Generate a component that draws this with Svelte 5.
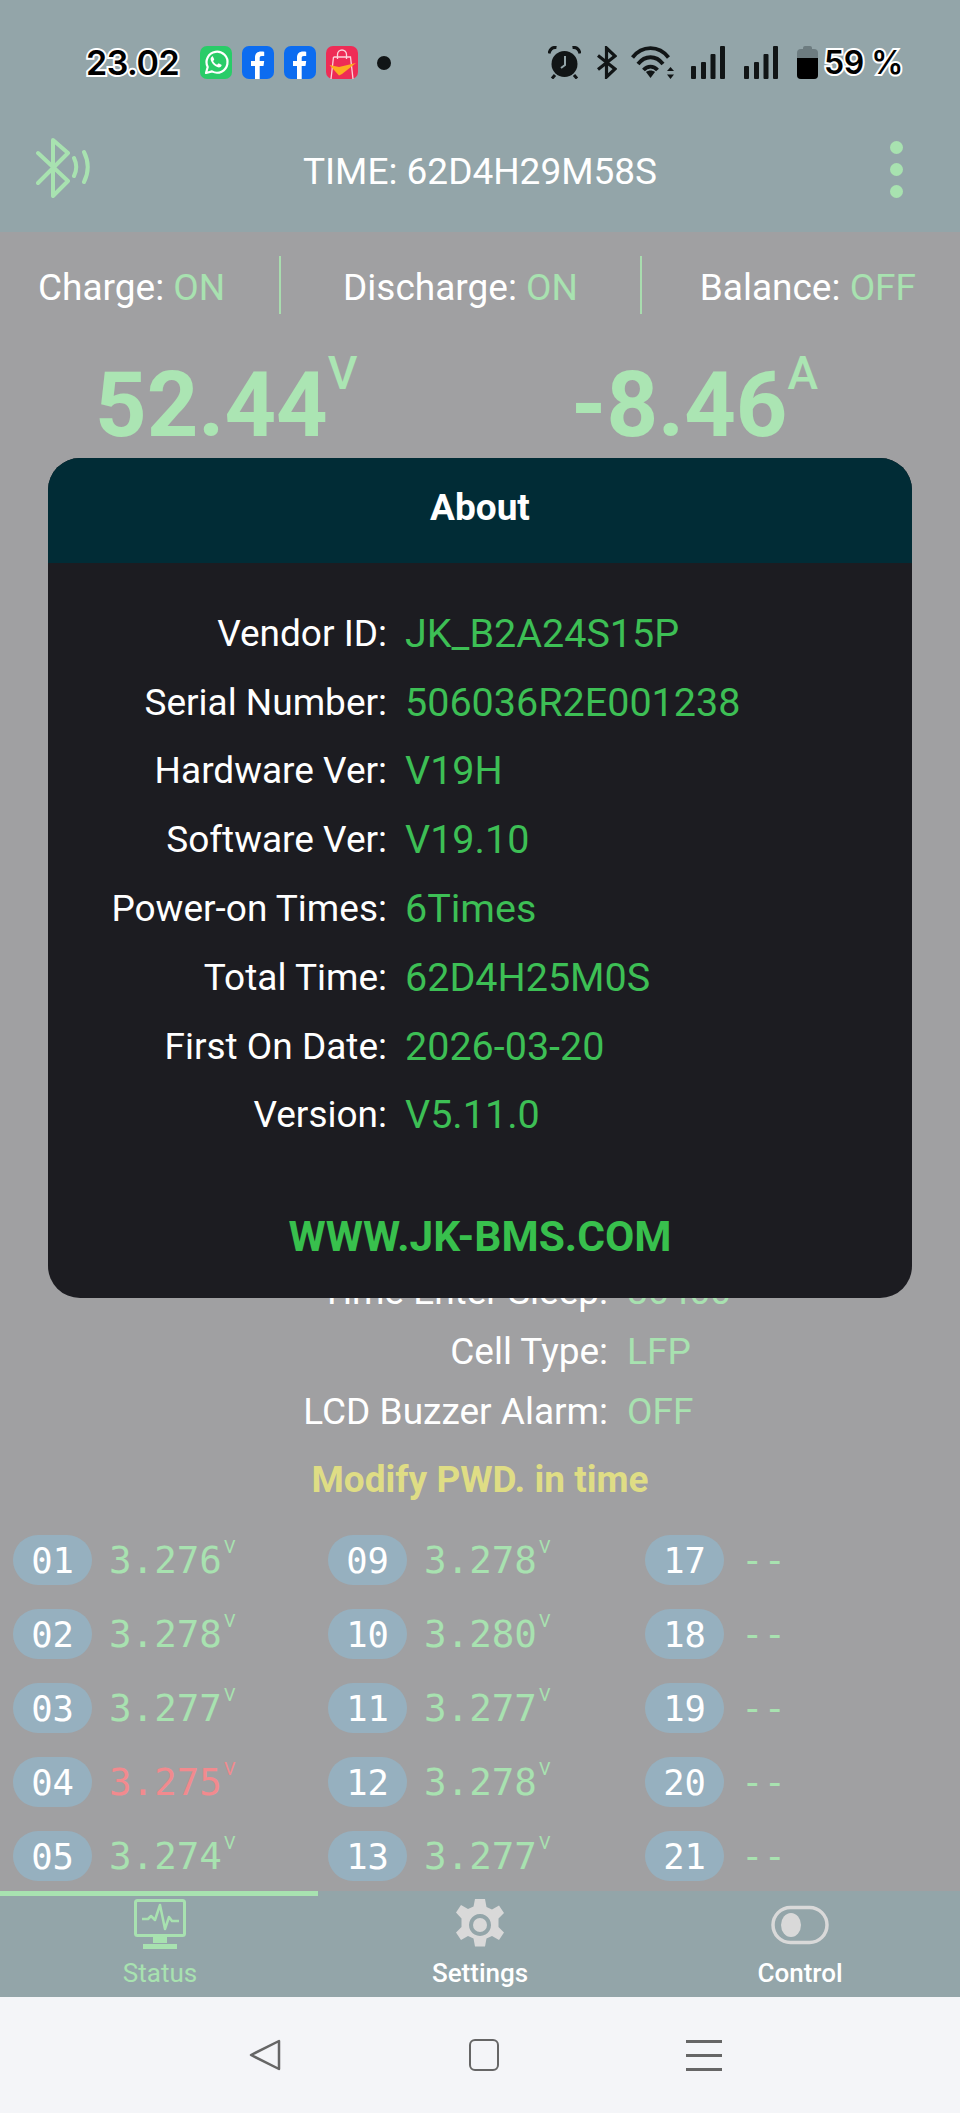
<script lang="ts">
	const switches = [
		{ label: 'Charge:', value: 'ON' },
		{ label: 'Discharge:', value: 'ON' },
		{ label: 'Balance:', value: 'OFF' }
	];

	const readings = [
		{ value: '52.44', unit: 'V' },
		{ value: '-8.46', unit: 'A' }
	];

	const settings = [
		{ label: 'Time Enter Sleep:', value: '86400' },
		{ label: 'Cell Type:', value: 'LFP' },
		{ label: 'LCD Buzzer Alarm:', value: 'OFF' }
	];

	const cells = [
		[
			{ id: '01', v: '3.276' },
			{ id: '02', v: '3.278' },
			{ id: '03', v: '3.277' },
			{ id: '04', v: '3.275', low: true },
			{ id: '05', v: '3.274' }
		],
		[
			{ id: '09', v: '3.278' },
			{ id: '10', v: '3.280' },
			{ id: '11', v: '3.277' },
			{ id: '12', v: '3.278' },
			{ id: '13', v: '3.277' }
		],
		[
			{ id: '17' },
			{ id: '18' },
			{ id: '19' },
			{ id: '20' },
			{ id: '21' }
		]
	];

	const about = [
		['Vendor ID:', 'JK_B2A24S15P'],
		['Serial Number:', '506036R2E001238'],
		['Hardware Ver:', 'V19H'],
		['Software Ver:', 'V19.10'],
		['Power-on Times:', '6Times'],
		['Total Time:', '62D4H25M0S'],
		['First On Date:', '2026-03-20'],
		['Version:', 'V5.11.0']
	];
</script>

{#snippet fbIcon()}
	<svg class="app-icon" viewBox="0 0 32 33">
		<rect width="32" height="33" rx="7" fill="#0c6cf0" />
		<path d="M13 33V20H9v-5h4v-3.500C13 7.500 15.500 5.500 19 5.500c1.500 0 2.800.1 3.200.2v4.300h-2.300c-1.800 0-2.200.9-2.200 2.100V15h4.500l-.7 5h-3.800v13z" fill="#fff" />
	</svg>
{/snippet}

{#snippet signalIcon()}
	<svg class="signal" viewBox="0 0 34 33">
		<rect x="0" y="20" width="5" height="13" rx="1" />
		<rect x="10" y="16" width="5" height="17" rx="1" />
		<rect x="19.500" y="8" width="5" height="25" rx="1" />
		<rect x="29" y="0" width="5" height="33" rx="1" />
	</svg>
{/snippet}

<div class="screen">
	<header class="top">
		<div class="status-bar">
			<div class="status-left">
				<span class="clock">23.02</span>
				<div class="app-icons">
					<svg class="app-icon" viewBox="0 0 32 33">
						<rect width="32" height="33" rx="7" fill="#29cc68" />
						<path d="M6 27l1.700-6A10.500 10.500 0 1 1 12 25.400z" fill="none" stroke="#fff" stroke-width="2.200" stroke-linejoin="round" />
						<path d="M12 10.500c-1.500 1-1.800 2.800-.8 4.800 1.300 2.700 3.300 4.600 6 5.700 1.900.8 3.500.3 4.300-1.200.2-.4.200-.8-.1-1l-2.400-1.300c-.3-.2-.6-.1-.8.1l-1 1.200c-1.800-.7-3.300-2.100-4.100-3.900l.9-1c.2-.3.3-.5.100-.8L13 10.700c-.2-.4-.6-.4-1-.2z" fill="#fff" />
					</svg>
					{@render fbIcon()}
					{@render fbIcon()}
					<svg class="app-icon" viewBox="0 0 32 33">
						<rect width="32" height="33" rx="7" fill="#ee2c56" />
						<path d="M7.500 11h17l2.500 22M7.500 11L5 33M11.500 13V8.500a4.500 4.500 0 0 1 9 0V13" fill="none" stroke="#fbd5dc" stroke-width="1.300" />
						<path d="M3.500 19l9.500 2 17-4-14 11-3 1.500z" fill="#fdae1f" />
					</svg>
				</div>
				<span class="notif-dot"></span>
			</div>
			<div class="status-right">
				<svg class="alarm" viewBox="0 0 33 33">
					<circle cx="16.500" cy="18" r="13" fill="#111516" />
					<path d="M1 7.500C2 3 5 1 8.500 1.500M32 7.500C31 3 28 1 24.500 1.500" fill="none" stroke="#111516" stroke-width="3" />
					<path d="M7 29l-3 3.500M26 29l3 3.500" stroke="#111516" stroke-width="3" />
					<path d="M17 10v9l-4 3" fill="none" stroke="#93a5a9" stroke-width="2" />
				</svg>
				<svg class="bt" viewBox="0 0 21 33">
					<path d="M2 9.500L19 23l-8.500 8V2L19 10 2 23.500" fill="none" stroke="#111516" stroke-width="3.200" />
				</svg>
				<svg class="wifi" viewBox="0 0 45 33">
					<path d="M1.500 11.500C11 -1 28 -1 37.500 11.500M7 18C14 9 25 9 32 18M12.500 24c4-4.500 10-4.500 14 0" fill="none" stroke="#111516" stroke-width="3.800" />
					<path d="M15 26c2.500-2 6.500-2 9 0l-4.500 6z" fill="#111516" />
					<path d="M39.500 21l-3.500 4h7zM39.500 33l-3.500-4.500h7z" fill="#111516" />
				</svg>
				{@render signalIcon()}
				{@render signalIcon()}
				<span class="battery"><span class="battery-fill"></span></span>
				<span class="percent">59 %</span>
			</div>
		</div>
		<div class="app-bar">
			<svg class="ble" viewBox="0 0 56 60">
				<path d="M2 15L32 43 17 58V2L32 15 2 45" fill="none" stroke="#a8e2b0" stroke-width="4" stroke-linejoin="round" stroke-linecap="round" />
				<path d="M38 20c3 6 3 12 0 18M48 14c5 10 5 20 0 30" fill="none" stroke="#a8e2b0" stroke-width="4" stroke-linecap="round" />
			</svg>
			<h1>TIME: 62D4H29M58S</h1>
			<div class="more">
				<span></span>
				<span></span>
				<span></span>
			</div>
		</div>
	</header>

	<main class="content">
		<div class="switches">
			{#each switches as s, i}
				{#if i > 0}<span class="divider"></span>{/if}
				<span class="switch">{s.label} <em>{s.value}</em></span>
			{/each}
		</div>

		<div class="readings">
			{#each readings as r}
				<div class="reading">{r.value}<sup>{r.unit}</sup></div>
			{/each}
		</div>

		<div class="settings">
			{#each settings as s}
				<div class="setting">
					<span class="setting-label">{s.label}</span>
					<span class="setting-value">{s.value}</span>
				</div>
			{/each}
		</div>

		<div class="modify">Modify PWD. in time</div>

		<div class="cells">
			{#each cells as col}
				<div class="cell-col">
					{#each col as c}
						<div class="cell">
							<span class="pill">{c.id}</span>
							{#if c.v}
								<span class="volt" class:low={c.low}>{c.v}<sup>V</sup></span>
							{:else}
								<span class="volt">--</span>
							{/if}
						</div>
					{/each}
				</div>
			{/each}
		</div>
	</main>

	<nav class="tabs">
		<div class="tab active">
			<svg class="tab-icon" viewBox="0 0 54 54">
				<rect x="2.500" y="2.500" width="49" height="35" rx="2" fill="none" stroke="currentColor" stroke-width="3" />
				<path d="M9 21h6l3-3 4 4 5-15 5 24 4-12 3 4h7" fill="none" stroke="currentColor" stroke-width="2.500" stroke-linejoin="round" />
				<path d="M20 39h14v6h-14zM10 46h34v5H10z" fill="currentColor" />
			</svg>
			<span>Status</span>
		</div>
		<div class="tab">
			<svg class="tab-icon" viewBox="0 0 54 54">
				<path fill="#d9d9d9" fill-rule="evenodd" d="M22 1h10l1.500 8 5.500 2.500 7-4 5 7.500-5.500 5.500v8.500l5.500 5.500-5 7.500-7-4-5.500 2.500-1.500 8H22l-1.500-8-5.500-2.500-7 4-5-7.500 5.500-5.500v-8.500L3 14.500l5-7.500 7 4 5.500-2.500z M27 16a11 11 0 1 0 .01 0z" />
				<circle cx="27" cy="27" r="7" fill="#d9d9d9" />
			</svg>
			<span>Settings</span>
		</div>
		<div class="tab">
			<svg class="tab-icon" viewBox="0 0 58 54">
				<rect x="2" y="9.500" width="54" height="35" rx="17.500" fill="none" stroke="#d9d9d9" stroke-width="3.500" />
				<ellipse cx="20" cy="27" rx="10" ry="12" fill="#d9d9d9" />
			</svg>
			<span>Control</span>
		</div>
	</nav>

	<div class="system-nav">
		<svg class="sys-back" viewBox="0 0 32 32">
			<path d="M30 2v28L2 16z" fill="none" stroke="#666" stroke-width="2.500" stroke-linejoin="round" />
		</svg>
		<span class="sys-home"></span>
		<span class="sys-menu">
			<span></span>
			<span></span>
			<span></span>
		</span>
	</div>

	<!-- About dialog sits over the status page -->
	<section class="dialog">
		<h2>About</h2>
		<div class="dialog-body">
			{#each about as row}
				<div class="about-row">
					<span class="about-label">{row[0]}</span>
					<span class="about-value">{row[1]}</span>
				</div>
			{/each}
		</div>
		<div class="website">WWW.JK-BMS.COM</div>
	</section>
</div>

<style>
	:global(body) {
		margin: 0;
		background: #a0a0a2;
	}

	.screen {
		position: relative;
		width: 960px;
		height: 2113px;
		display: flex;
		flex-direction: column;
		overflow: hidden;
		background: #a0a0a2;
		color: #fff;
		font-family: Roboto, sans-serif;
	}

	/* top bars */
	.top {
		height: 232px;
		flex-shrink: 0;
		background: #93a5a9;
	}

	.status-bar {
		height: 124px;
		box-sizing: border-box;
		padding: 46px 60px 0 86px;
		display: flex;
		justify-content: space-between;
		align-items: flex-start;
	}

	.status-left,
	.status-right {
		display: flex;
		align-items: center;
		height: 33px;
	}

	.clock,
	.percent {
		color: #000;
		font-family: Inter, Roboto, sans-serif;
		font-size: 34px;
		font-weight: 600;
		letter-spacing: -0.5px;
		-webkit-text-stroke: 4px #fff;
		paint-order: stroke fill;
	}

	.clock {
		width: 114px;
	}

	.app-icons {
		display: flex;
		gap: 10px;
	}

	.app-icon {
		width: 32px;
		height: 33px;
		display: block;
	}

	.notif-dot {
		width: 14px;
		height: 14px;
		border-radius: 50%;
		background: #111516;
		margin-left: 19px;
	}

	.alarm {
		width: 33px;
		height: 33px;
	}

	.bt {
		width: 21px;
		height: 33px;
		margin-left: 15px;
	}

	.wifi {
		width: 45px;
		height: 33px;
		margin-left: 14px;
		margin-right: 15px;
	}

	.signal {
		width: 34px;
		height: 33px;
		fill: #111516;
		margin-right: 19px;
	}

	.battery {
		position: relative;
		width: 21px;
		height: 30px;
		margin-top: 3px;
		margin-right: 6px;
		border-radius: 4px;
		background: #6d7c80;
		display: flex;
		align-items: flex-end;
	}

	.battery::before {
		content: '';
		position: absolute;
		left: 6px;
		top: -3px;
		width: 9px;
		height: 4px;
		border-radius: 2px 2px 0 0;
		background: #6d7c80;
	}

	.battery-fill {
		display: block;
		width: 100%;
		height: 21px;
		background: #000;
		border-radius: 0 0 4px 4px;
	}

	.percent {
		font-size: 32px;
		width: 76px;
		white-space: nowrap;
	}

	.app-bar {
		position: relative;
		height: 108px;
		display: flex;
		align-items: center;
		justify-content: center;
	}

	.app-bar h1 {
		margin: -14px 0 0;
		font-size: 37px;
		font-weight: 400;
	}

	.ble {
		position: absolute;
		left: 36px;
		top: 14px;
		width: 56px;
		height: 60px;
	}

	.more {
		position: absolute;
		right: 57px;
		top: 17px;
		display: flex;
		flex-direction: column;
		gap: 9px;
	}

	.more span {
		width: 13px;
		height: 13px;
		border-radius: 50%;
		background: #a8e2b0;
	}

	/* status page */
	.content {
		flex: 1;
		overflow: hidden;
	}

	em {
		font-style: normal;
		color: #a8e2b0;
	}

	.switches {
		height: 58px;
		margin-top: 24px;
		padding: 0 44px 0 38px;
		display: grid;
		grid-template-columns: 241px 2px 359px 2px 1fr;
		align-items: center;
		font-size: 37px;
	}

	.switch {
		padding-top: 5px;
		white-space: nowrap;
	}

	.switch:nth-of-type(3) {
		justify-self: center;
	}

	.switch:last-child {
		justify-self: end;
	}

	.divider {
		width: 2px;
		height: 58px;
		background: #a8dcae;
	}

	.readings {
		margin-top: 42px;
		padding-left: 95px;
		display: grid;
		grid-template-columns: 476px 1fr;
	}

	.reading {
		font-size: 90px;
		font-weight: 700;
		line-height: 100px;
		color: #abe5b3;
		white-space: nowrap;
	}

	.reading sup {
		font-size: 46px;
		font-weight: 500;
		line-height: 0;
		vertical-align: 47px;
	}

	.settings {
		margin-top: 805px;
	}

	.setting {
		height: 60px;
		display: grid;
		grid-template-columns: 608px 1fr;
		column-gap: 19px;
		align-items: center;
		font-size: 37px;
	}

	.setting-label {
		text-align: right;
	}

	.setting-value {
		color: #a8e2b0;
	}

	.modify {
		margin-top: 17px;
		text-align: center;
		font-size: 37px;
		font-weight: 700;
		color: #dfdd85;
	}

	.cells {
		margin-top: 34px;
		padding-left: 13px;
		display: grid;
		grid-template-columns: 315px 317px 1fr;
	}

	.cell-col {
		display: flex;
		flex-direction: column;
		gap: 24px;
	}

	.cell {
		display: flex;
		align-items: center;
		font-family: 'DejaVu Sans Mono', monospace;
	}

	.pill {
		width: 79px;
		height: 50px;
		border-radius: 25px;
		background: #96b0bf;
		font-size: 35.500px;
		display: flex;
		align-items: center;
		justify-content: center;
	}

	.volt {
		margin-left: 17px;
		font-size: 37.500px;
		color: #a8e2b0;
		white-space: nowrap;
	}

	.volt.low {
		color: #f28a8e;
	}

	.volt sup {
		font-size: 18px;
		line-height: 0;
		vertical-align: 20px;
		font-family: Roboto, sans-serif;
		margin-left: 2px;
	}

	/* bottom bars */
	.tabs {
		height: 106px;
		flex-shrink: 0;
		background: #93a5a9;
		display: grid;
		grid-template-columns: repeat(3, 1fr);
	}

	.tab {
		display: flex;
		flex-direction: column;
		align-items: center;
		padding-top: 7px;
		font-size: 26px;
		font-weight: 500;
	}

	.tab.active {
		color: #a8e2b0;
		font-weight: 400;
		background: linear-gradient(#a8e2b0, #a8e2b0) 0 0 / 318px 5px no-repeat;
	}

	.tab-icon {
		width: 58px;
		height: 54px;
		margin-bottom: 6px;
	}

	.system-nav {
		height: 116px;
		flex-shrink: 0;
		background: #f4f5f8;
		position: relative;
		display: grid;
		grid-template-columns: 32px 32px 33px;
		justify-content: center;
		column-gap: 188px;
		align-items: center;
		padding-left: 10px;
		box-sizing: border-box;
	}

	.sys-back {
		width: 32px;
		height: 32px;
	}

	.sys-home {
		width: 26px;
		height: 28px;
		border: 2.500px solid #666;
		border-radius: 6px;
	}

	.sys-menu {
		display: flex;
		flex-direction: column;
		gap: 11px;
		margin-left: -3px;
	}

	.sys-menu span {
		height: 3px;
		background: #666;
	}

	/* dialog */
	.dialog {
		position: absolute;
		left: 48px;
		top: 458px;
		width: 864px;
		height: 840px;
		background: #1c1c21;
		border-radius: 32px;
		overflow: hidden;
		display: flex;
		flex-direction: column;
	}

	.dialog h2 {
		margin: 0;
		height: 105px;
		line-height: 100px;
		background: #012c36;
		text-align: center;
		font-size: 37px;
		font-weight: 700;
	}

	.dialog-body {
		padding-top: 36px;
	}

	.about-row {
		height: 68.800px;
		display: grid;
		grid-template-columns: 339px 1fr;
		column-gap: 18px;
		align-items: center;
		font-size: 37px;
	}

	.about-label {
		text-align: right;
	}

	.about-value {
		color: #3dbf55;
		font-size: 39.500px;
	}

	.website {
		margin-top: 63px;
		text-align: center;
		font-size: 42.500px;
		font-weight: 700;
		color: #38c04d;
	}
</style>
